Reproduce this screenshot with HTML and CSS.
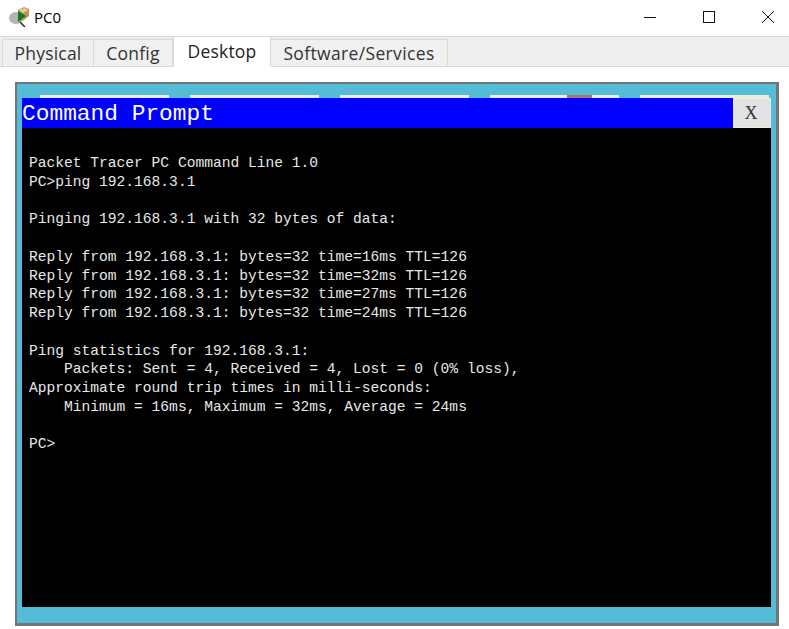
FILE: index.html
```html
<!DOCTYPE html>
<html lang="en">
<head>
<meta charset="utf-8">
<title>PC0</title>
<link rel="stylesheet" href="styles.css">
</head>
<body>
<header class="titlebar">
  <div class="title">
    <svg class="app-icon" width="20" height="20" viewBox="0 0 20 20">
      <ellipse cx="7" cy="11" rx="7" ry="6" fill="#b5b5b0"/>
      <path d="M11 15l5 5" stroke="#333" stroke-width="1.6"/>
      <path d="M9 3l6-3 5 2v7l-5 4-6 2z" fill="#b8955a"/>
      <path d="M10 3l6-2 3 2-5 3z" fill="#e3cd96"/>
      <path d="M9 4l8 5-8 6z" fill="#0f7a1e"/>
    </svg>
    <span>PC0</span>
  </div>
  <div class="winbtns">
    <svg width="14" height="14" viewBox="0 0 14 14"><path d="M1 7.5h12" stroke="#111" fill="none"/></svg>
    <svg width="14" height="14" viewBox="0 0 14 14"><rect x="1.5" y="1.5" width="11" height="11" stroke="#111" fill="none"/></svg>
    <svg width="14" height="14" viewBox="0 0 14 14"><path d="M1 1l12 12M13 1L1 13" stroke="#111" fill="none"/></svg>
  </div>
</header>
<nav class="tabs">
  <div class="tab tab-physical">Physical</div>
  <div class="tab tab-config">Config</div>
  <div class="tab tab-desktop">Desktop</div>
  <div class="tab tab-software">Software/Services</div>
</nav>
<main class="content">
  <section class="frame">
    <div class="peek">
      <span class="peek-btn"></span>
      <span class="peek-btn"></span>
      <span class="peek-btn"></span>
      <span class="peek-btn peek-red"></span>
      <span class="peek-btn"></span>
    </div>
    <div class="prompt-head">
      <h1 class="prompt-title">Command Prompt</h1>
      <div class="close-x">X</div>
    </div>
    <pre class="terminal">Packet Tracer PC Command Line 1.0
PC&gt;ping 192.168.3.1

Pinging 192.168.3.1 with 32 bytes of data:

Reply from 192.168.3.1: bytes=32 time=16ms TTL=126
Reply from 192.168.3.1: bytes=32 time=32ms TTL=126
Reply from 192.168.3.1: bytes=32 time=27ms TTL=126
Reply from 192.168.3.1: bytes=32 time=24ms TTL=126

Ping statistics for 192.168.3.1:
    Packets: Sent = 4, Received = 4, Lost = 0 (0% loss),
Approximate round trip times in milli-seconds:
    Minimum = 16ms, Maximum = 32ms, Average = 24ms

PC&gt;</pre>
  </section>
</main>
</body>
</html>
```
FILE: styles.css
```css
* { box-sizing: border-box; }
html, body { margin: 0; padding: 0; }
body {
  width: 789px;
  height: 629px;
  overflow: hidden;
  background: #fff;
  font-family: "Open Sans", "Noto Sans", sans-serif;
}
.titlebar {
  height: 36px;
  display: flex;
  align-items: center;
  justify-content: space-between;
  padding: 0 14px 3px 9px;
}
.title {
  display: flex;
  align-items: center;
  gap: 5px;
  font-size: 15px;
  color: #000;
}
.winbtns {
  display: flex;
  gap: 45px;
}
.winbtns svg { display: block; }
.tabs {
  height: 31px;
  display: flex;
  align-items: flex-end;
  padding-left: 2px;
  background: #eeeeee;
  border-top: 1px solid #d9d9d9;
  border-bottom: 1px solid #d9d9d9;
}
.tab {
  height: 28px;
  margin-bottom: -1px;
  display: flex;
  align-items: center;
  justify-content: center;
  font-size: 17.5px;
  letter-spacing: 0.2px;
  color: #333;
  background: #f0f0f0;
  border: 1px solid #d9d9d9;
  border-bottom-color: #d9d9d9;
}
.tab-physical { width: 92px; }
.tab-config { width: 79px; border-left: 0; }
.tab-desktop {
  width: 98px;
  height: 30px;
  padding-bottom: 2px;
  color: #222;
  background: #fff;
  border-top: 0;
  border-bottom-color: #fff;
}
.tab-software { width: 177px; border-left: 0; letter-spacing: 0.35px; }
.content {
  padding: 15px 10px 0 15px;
}
.frame {
  width: 764px;
  height: 544px;
  padding: 11px 5px 0 5px;
  background: #54bcd6;
  border: 2px solid #757575;
  border-bottom-width: 3px;
  border-right-width: 3px;
}
.peek {
  height: 3px;
  display: flex;
  gap: 21px;
  padding-left: 18px;
}
.peek-btn {
  width: 129px;
  height: 3px;
  background: #e9ecdf;
}
.peek-red {
  background: linear-gradient(to right, #e9ecdf 0 77px, #a5766c 77px 102px, #e9ecdf 102px);
}
.prompt-head {
  height: 30px;
  display: flex;
  background: #0000ff;
  width: 749px;
  position: relative;
}
.prompt-title {
  margin: 0;
  padding-top: 2px;
  font-family: "Liberation Mono", "Courier New", monospace;
  font-size: 22.85px;
  font-weight: 400;
  line-height: 28px;
  color: #fff;
}
.close-x {
  position: absolute;
  right: 0;
  top: 0;
  width: 38px;
  height: 30px;
  padding-right: 2px;
  display: flex;
  align-items: center;
  justify-content: center;
  font-family: "Liberation Serif", "Times New Roman", serif;
  font-size: 18px;
  color: #333;
  background: #e3e3e3;
  border: 1px solid #d0d0c8;
  outline: 1px solid #eeeee2;
  outline-offset: -1px;
}
.terminal {
  margin: 0;
  width: 749px;
  height: 479px;
  padding: 26px 7px 0 7px;
  background: #000;
  color: #e8e8e8;
  font-family: "Liberation Mono", "Courier New", monospace;
  font-size: 14.6px;
  line-height: 18.75px;
  white-space: pre;
  overflow: hidden;
}
```
